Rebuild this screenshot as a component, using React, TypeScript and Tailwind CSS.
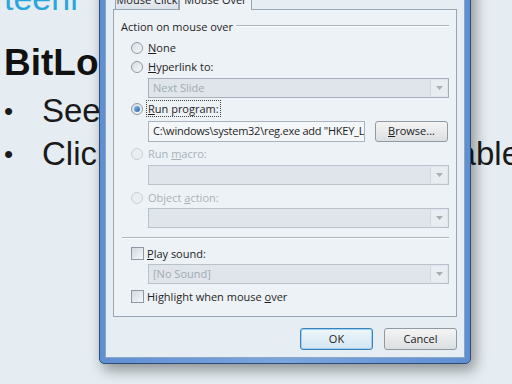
import clsx from 'clsx'

function Radio({ checked, disabled }: { checked?: boolean; disabled?: boolean }) {
  return (
    <span
      className={clsx(
        'flex h-[12px] w-[12px] shrink-0 items-center justify-center rounded-full border',
        disabled
          ? 'border-[#c9d0d6] bg-[#e9eef2]'
          : 'border-[#8d99a6] bg-gradient-to-br from-[#d6dce2] to-[#f8fafb]'
      )}
    >
      {checked && (
        <span className="h-[6px] w-[6px] rounded-full bg-gradient-to-br from-[#8fc0ee] to-[#1f5fa8]" />
      )}
    </span>
  )
}

function Checkbox() {
  return (
    <span className="h-[13px] w-[13px] shrink-0 border border-[#8e99a5] bg-gradient-to-br from-[#d3d9df] to-[#f6f8fa]" />
  )
}

function Arrow() {
  return (
    <span className="flex h-full w-[17px] items-center justify-center border-l border-[#d0d7dd] bg-[#e8edf1]">
      <svg width="7" height="4" viewBox="0 0 7 4">
        <path d="M0 0h7L3.5 4z" fill="#a7b0b8" />
      </svg>
    </span>
  )
}

function Dropdown({ text, enabled, mt }: { text?: string; enabled?: boolean; mt: string }) {
  return (
    <div
      className={clsx(
        'ml-[34px] mr-[7px] flex h-[20px] items-center justify-between border pl-[4px] pr-[1px]',
        enabled ? 'border-[#a5b0ba] bg-[#dfe5ea]' : 'border-[#b8c2cb] bg-[#dfe5ea]',
        mt
      )}
    >
      <span className="text-[#a2abb3]">{text}</span>
      <span className="h-[16px]">
        <Arrow />
      </span>
    </div>
  )
}

function Option({
  children,
  checked,
  disabled,
  focus,
  mt,
}: {
  children: React.ReactNode
  checked?: boolean
  disabled?: boolean
  focus?: boolean
  mt: string
}) {
  return (
    <div className={clsx('flex h-[19px] items-center gap-[3px] pl-[17px]', mt)}>
      <Radio checked={checked} disabled={disabled} />
      <span
        className={clsx(
          'px-[1px] leading-[15px]',
          disabled ? 'text-[#a9b1b8]' : 'text-[#1e1e1e]',
          focus ? 'border border-dotted border-[#444]' : 'border border-transparent'
        )}
      >
        {children}
      </span>
    </div>
  )
}

export default function App() {
  return (
    <div className="relative h-[384px] w-[512px] overflow-hidden bg-[#e5edf2] font-['Liberation_Sans',sans-serif]">
      {/* slide behind the dialog */}
      <div className="flex flex-col pl-[4px]">
        <div className="flex h-[11px] items-end overflow-hidden">
          <span className="whitespace-nowrap text-[34px] leading-[26px] text-[#2aa6dc]">teenr</span>
        </div>
        <div className="mt-[32px] h-[40px] text-[37px] font-bold leading-[40px] text-[#111]">BitLo</div>
        <div className="mt-[8px] flex h-[40px] items-center text-[33px] leading-[40px] text-[#1a1a1a]">
          <span className="w-[38px] text-[26px]">•</span>
          <span>See</span>
        </div>
        <div className="mt-[3px] flex h-[40px] items-center text-[33px] leading-[40px] text-[#1a1a1a]">
          <span className="w-[38px] text-[26px]">•</span>
          <span>Click</span>
          <span className="ml-auto mr-[-8px]">able</span>
        </div>
      </div>

      {/* Action Settings dialog */}
      <div className="absolute left-[99px] top-[-24px] w-[372px] rounded-b-[5px] border border-[#2e4c74] bg-gradient-to-r from-[#5f8fd3] via-[#7aa5de] to-[#5f8fd3] p-[5px] shadow-[4px_6px_14px_rgba(0,0,0,0.4)]">
        <div className="border border-[#8ea6c4] bg-[#e6edf3] px-[7px] pb-[7px] pt-[6px] font-['Open_Sans',sans-serif] text-[11px] text-[#1e1e1e]">
          {/* tabs */}
          <div className="flex h-[20px] items-end pl-[2px]">
            <div className="flex h-[18px] w-[64px] items-center justify-center whitespace-nowrap border border-b-0 border-[#95a4b5] bg-gradient-to-b from-[#f0f3f6] to-[#dbe2e9] text-[#222]">
              Mouse Click
            </div>
            <div className="relative z-10 mb-[-1px] flex h-[21px] w-[73px] items-center justify-center whitespace-nowrap border border-b-0 border-[#95a4b5] bg-[#eef3f7] text-[#222]">
              Mouse Over
            </div>
          </div>

          {/* panel */}
          <div className="flex flex-col border border-[#98a6b4] bg-[#edf2f6] pb-[10px] pt-[8px]">
            <div className="flex h-[16px] items-center gap-[3px] pl-[7px] pr-[7px]">
              <span className="leading-[15px]">Action on mouse over</span>
              <span className="h-[2px] flex-1 border-t border-b border-t-[#a8b4bf] border-b-white" />
            </div>

            <Option mt="mt-[4px]">
              <u>N</u>one
            </Option>
            <Option mt="mt-0">
              <u>H</u>yperlink to:
            </Option>
            <Dropdown text="Next Slide" enabled mt="mt-[2px]" />
            <Option checked focus mt="mt-[1px]">
              <u>R</u>un program:
            </Option>
            <div className="ml-[34px] mr-[8px] mt-[3px] flex h-[21px] items-center gap-[10px]">
              <div className="flex h-full w-[217px] items-center overflow-hidden whitespace-nowrap border border-[#a9b4bf] bg-[#f4f7f9] pl-[4px] tracking-[-0.25px] text-[#1e1e1e]">
                C:\windows\system32\reg.exe add "HKEY_L
              </div>
              <button className="flex h-full flex-1 items-center justify-center rounded-[3px] border border-[#8f9aa5] bg-gradient-to-b from-[#f4f4f4] to-[#dcdfe2] text-[#222]">
                <u>B</u>rowse...
              </button>
            </div>
            <Option disabled mt="mt-[2px]">
              Run <u>m</u>acro:
            </Option>
            <Dropdown mt="mt-[2px]" />
            <Option disabled mt="mt-[3px]">
              Object <u>a</u>ction:
            </Option>
            <Dropdown mt="mt-[1px]" />

            <div className="ml-[8px] mr-[7px] mt-[9px] h-[2px] border-t border-b border-t-[#a8b4bf] border-b-white" />

            <div className="mt-[5px] flex h-[19px] items-center gap-[3px] pl-[17px]">
              <Checkbox />
              <span className="leading-[15px]">
                <u>P</u>lay sound:
              </span>
            </div>
            <Dropdown text="[No Sound]" mt="mt-[1px]" />
            <div className="mt-[3px] flex h-[19px] items-center gap-[3px] pl-[17px]">
              <Checkbox />
              <span className="leading-[15px]">
                Highlight when mouse <u>o</u>ver
              </span>
            </div>
          </div>

          {/* buttons */}
          <div className="mt-[11px] flex h-[22px] justify-end gap-[11px]">
            <button className="flex w-[73px] items-center justify-center rounded-[3px] border border-[#3c80b8] bg-gradient-to-b from-[#eef6fb] to-[#d4e6f3] text-[#222] shadow-[inset_0_0_0_1px_#9fd3f3]">
              OK
            </button>
            <button className="flex w-[73px] items-center justify-center rounded-[3px] border border-[#8f9aa5] bg-gradient-to-b from-[#f4f4f4] to-[#dcdfe2] text-[#222]">
              Cancel
            </button>
          </div>
        </div>
      </div>
    </div>
  )
}
